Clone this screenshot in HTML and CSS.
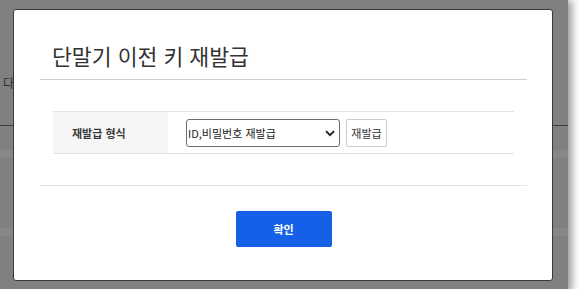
FILE: index.html
```html
<!DOCTYPE html>
<html lang="ko">
<head>
<meta charset="utf-8">
<title>단말기 이전 키 재발급</title>
<link rel="stylesheet" href="styles.css">
</head>
<body>
<div class="screen">
  <div class="page">
    <div class="page-text">다</div>
    <div class="page-rule"></div>
    <div class="page-band band-1"></div>
    <div class="page-band band-2"></div>
  </div>
  <div class="modal">
    <div class="modal-header">
      <h1 class="modal-title">단말기 이전 키 재발급</h1>
    </div>
    <div class="modal-body">
      <table class="form-table">
        <tr>
          <th class="form-label">재발급 형식</th>
          <td class="form-value">
            <div class="field-row">
              <div class="select-wrap">
                <select class="select">
                  <option>ID,비밀번호 재발급</option>
                </select>
                <svg class="select-arrow" width="10" height="7" viewBox="0 0 10 7"><path d="M1 1.2 L5 5.2 L9 1.2" fill="none" stroke="#222" stroke-width="1.9"/></svg>
              </div>
              <button class="btn-small" type="button">재발급</button>
            </div>
          </td>
        </tr>
      </table>
    </div>
    <div class="modal-footer">
      <button class="btn-primary" type="button">확인</button>
    </div>
  </div>
</div>
</body>
</html>
```
FILE: styles.css
```css
html, body {
  margin: 0;
  padding: 0;
  background: #ffffff;
  font-family: "Noto Sans CJK KR", "Noto Sans", sans-serif;
}

.screen {
  position: relative;
  width: 568px;
  height: 289px;
  background: #808080;
  box-shadow: 2px 2px 8px 2px rgba(0, 0, 0, 0.4);
  overflow: hidden;
}

.page {
  display: flex;
  flex-direction: column;
  padding-top: 75px;
}

.page-text {
  padding-left: 3px;
  font-size: 12px;
  line-height: 16px;
  height: 16px;
  color: #2d2d2d;
}

.page-rule {
  margin-top: 34px;
  height: 1px;
  background: #3c3c3c;
}

.page-band {
  height: 8px;
  background: #878787;
}

.band-1 {
  margin-top: 24px;
}

.band-2 {
  margin-top: 70px;
}

.modal {
  position: absolute;
  left: 13px;
  top: 9px;
  width: 540px;
  box-sizing: border-box;
  background: #ffffff;
  border: 1px solid #3a3a3a;
  border-radius: 3px;
  padding: 0 25px 0 26px;
}

.modal-header {
  padding: 31px 0 8px 12px;
  border-bottom: 1px solid #cfcfcf;
}

.modal-title {
  margin: 0;
  font-size: 21.6px;
  line-height: 30px;
  font-weight: 400;
  color: #333333;
}

.modal-body {
  padding: 31px 13px;
}

.form-table {
  width: 100%;
  border-collapse: collapse;
  border-top: 1px solid #e2e2e2;
  border-bottom: 1px solid #e2e2e2;
}

.form-label {
  width: 115px;
  height: 42px;
  box-sizing: border-box;
  padding: 0 0 0 19px;
  background: #f6f6f6;
  text-align: left;
  font-size: 11px;
  font-weight: 700;
  color: #3a3a3a;
}

.form-value {
  padding: 0 0 0 18px;
}

.field-row {
  display: flex;
  align-items: center;
  gap: 6px;
}

.select-wrap {
  position: relative;
  width: 154px;
  height: 28px;
}

.select {
  appearance: none;
  -webkit-appearance: none;
  width: 100%;
  height: 100%;
  box-sizing: border-box;
  margin: 0;
  padding: 0 0 0 1px;
  border: 1px solid #6e6e6e;
  border-radius: 3px;
  background: #ffffff;
  font-family: "Noto Sans CJK KR", "Noto Sans", sans-serif;
  font-size: 11px;
  color: #222222;
}

.select-arrow {
  position: absolute;
  right: 5px;
  top: 11px;
  pointer-events: none;
}

.btn-small {
  width: 41px;
  height: 28px;
  box-sizing: border-box;
  margin: 0;
  padding: 0;
  border: 1px solid #cccccc;
  border-radius: 2px;
  background: #ffffff;
  font-family: "Noto Sans CJK KR", "Noto Sans", sans-serif;
  font-size: 11px;
  color: #333333;
}

.modal-footer {
  border-top: 1px solid #e4e4e4;
  padding: 25px 0 33px;
  display: flex;
  justify-content: center;
}

.btn-primary {
  width: 96px;
  height: 36px;
  margin: 0;
  padding: 0;
  border: none;
  border-radius: 2px;
  background: #1560e7;
  font-family: "Noto Sans CJK KR", "Noto Sans", sans-serif;
  font-size: 11px;
  font-weight: 700;
  color: #ffffff;
}
```
